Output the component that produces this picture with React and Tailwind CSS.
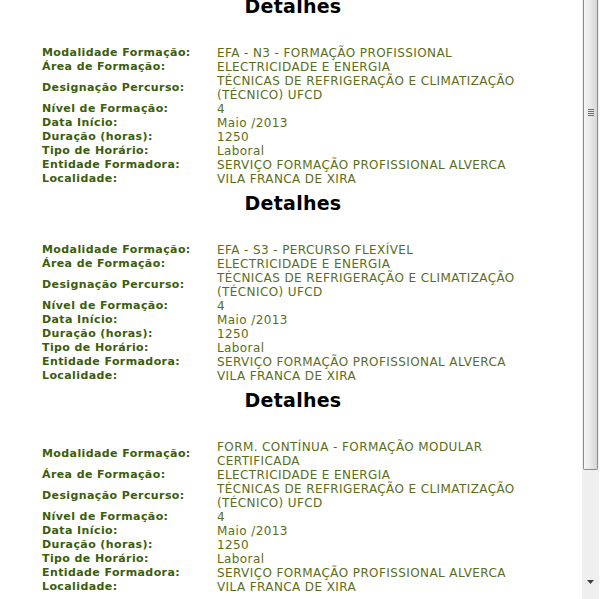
import React from "react";

const sections = [
  [
    ["Modalidade Formação:", ["EFA - N3 - FORMAÇÃO PROFISSIONAL"]],
    ["Área de Formação:", ["ELECTRICIDADE E ENERGIA"]],
    ["Designação Percurso:", ["TÉCNICAS DE REFRIGERAÇÃO E CLIMATIZAÇÃO", "(TÉCNICO) UFCD"]],
    ["Nível de Formação:", ["4"]],
    ["Data Início:", ["Maio /2013"]],
    ["Duração (horas):", ["1250"]],
    ["Tipo de Horário:", ["Laboral"]],
    ["Entidade Formadora:", ["SERVIÇO FORMAÇÃO PROFISSIONAL ALVERCA"]],
    ["Localidade:", ["VILA FRANCA DE XIRA"]],
  ],
  [
    ["Modalidade Formação:", ["EFA - S3 - PERCURSO FLEXÍVEL"]],
    ["Área de Formação:", ["ELECTRICIDADE E ENERGIA"]],
    ["Designação Percurso:", ["TÉCNICAS DE REFRIGERAÇÃO E CLIMATIZAÇÃO", "(TÉCNICO) UFCD"]],
    ["Nível de Formação:", ["4"]],
    ["Data Início:", ["Maio /2013"]],
    ["Duração (horas):", ["1250"]],
    ["Tipo de Horário:", ["Laboral"]],
    ["Entidade Formadora:", ["SERVIÇO FORMAÇÃO PROFISSIONAL ALVERCA"]],
    ["Localidade:", ["VILA FRANCA DE XIRA"]],
  ],
  [
    ["Modalidade Formação:", ["FORM. CONTÍNUA - FORMAÇÃO MODULAR", "CERTIFICADA"]],
    ["Área de Formação:", ["ELECTRICIDADE E ENERGIA"]],
    ["Designação Percurso:", ["TÉCNICAS DE REFRIGERAÇÃO E CLIMATIZAÇÃO", "(TÉCNICO) UFCD"]],
    ["Nível de Formação:", ["4"]],
    ["Data Início:", ["Maio /2013"]],
    ["Duração (horas):", ["1250"]],
    ["Tipo de Horário:", ["Laboral"]],
    ["Entidade Formadora:", ["SERVIÇO FORMAÇÃO PROFISSIONAL ALVERCA"]],
    ["Localidade:", ["VILA FRANCA DE XIRA"]],
  ],
];

function Section({ rows, first }) {
  return (
    <div>
      <h2
        className={`text-center pl-[4px] text-[19px] leading-[22px] tracking-[0.25px] font-bold text-black mb-[29px] ${
          first ? "-mt-[5px]" : "mt-[6px]"
        }`}
      >
        Detalhes
      </h2>
      <div className="w-[500px] mx-auto pl-[1px]">
        {rows.map(([label, value], i) => (
          <div key={i} className="grid grid-cols-[175px_325px] items-center">
            <div className="font-bold text-[11px] leading-[14px] tracking-[0.4px] text-[#3b5d0c] whitespace-nowrap">
              {label}
            </div>
            <div className="text-[12px] leading-[14px] tracking-[0.4px] text-[#5b6d1a] whitespace-nowrap">
              {value.map((v, j) => (
                <div key={j} className="h-[14px]">{v}</div>
              ))}
            </div>
          </div>
        ))}
      </div>
    </div>
  );
}

export default function App() {
  return (
    <div
      className="flex w-[614px] h-[599px] overflow-hidden bg-white leading-[14px]"
      style={{ fontFamily: '"DejaVu Sans", Verdana, sans-serif' }}
    >
      <div className="w-[582px] shrink-0 overflow-hidden">
        {sections.map((rows, i) => (
          <Section key={i} rows={rows} first={i === 0} />
        ))}
      </div>
      <div className="relative w-[17px] h-full bg-[#efefef] shrink-0">
        <div className="absolute left-[1px] top-0 w-[15px] h-[470px] border-x border-b border-[#8c8c8c] bg-gradient-to-r from-[#f5f5f5] via-[#e8e8e8] to-[#d6d6d6] rounded-b-[2px]">
          <div className="absolute left-[4px] top-[109px] flex flex-col gap-[1px]">
            <div className="w-[6px] h-[1px] bg-[#707070]" />
            <div className="w-[6px] h-[1px] bg-[#707070]" />
            <div className="w-[6px] h-[1px] bg-[#707070]" />
            <div className="w-[6px] h-[1px] bg-[#707070]" />
          </div>
        </div>
        <svg className="absolute left-[5px] top-[580px]" width="7" height="4" viewBox="0 0 7 4">
          <path d="M0 0 H7 L3.5 4 Z" fill="#404040" />
        </svg>
      </div>
      <div className="flex-1 bg-white" />
    </div>
  );
}
